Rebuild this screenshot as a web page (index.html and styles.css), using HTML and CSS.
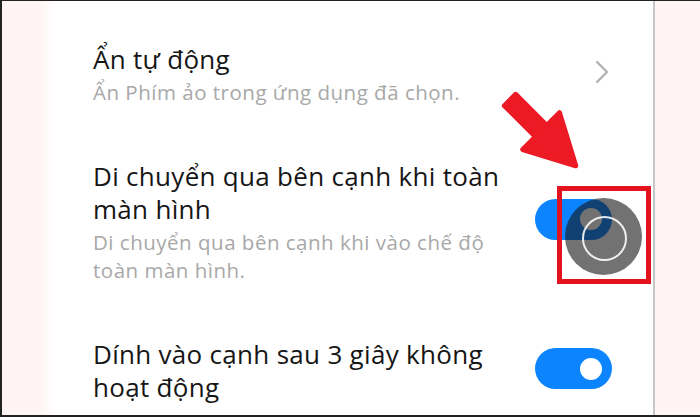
FILE: index.html
```html
<!DOCTYPE html>
<html lang="vi">
<head>
<meta charset="utf-8">
<title>Cài đặt</title>
<link rel="stylesheet" href="styles.css">
</head>
<body>
<div class="frame">
  <div class="side side-left"></div>
  <main class="main">
    <div class="row">
      <div class="text">
        <div class="title">Ẩn tự động</div>
        <div class="sub">Ẩn Phím ảo trong ứng dụng đã chọn.</div>
      </div>
      <div class="control control-chevron">
        <svg class="chevron" width="14" height="24" viewBox="0 0 14 24"><path d="M2 2 L12 12 L2 22" fill="none" stroke="#b3b3b3" stroke-width="2.4" stroke-linecap="round" stroke-linejoin="round"/></svg>
      </div>
    </div>
    <div class="row">
      <div class="text">
        <div class="title">Di chuyển qua bên cạnh khi toàn màn hình</div>
        <div class="sub">Di chuyển qua bên cạnh khi vào chế độ toàn màn hình.</div>
      </div>
      <div class="control">
        <div class="toggle"><span class="knob"></span></div>
      </div>
    </div>
    <div class="row">
      <div class="text">
        <div class="title">Dính vào cạnh sau 3 giây không hoạt động</div>
      </div>
      <div class="control">
        <div class="toggle"><span class="knob"></span></div>
      </div>
    </div>

    <div class="touch"><span class="touch-ring"></span></div>
    <div class="highlight"></div>
    <svg class="annot" viewBox="55 1 596 414" width="596" height="414">
      <polygon transform="translate(510 100) rotate(45)" points="0,-8 44,-8 44,-26 93,0 44,26 44,8 0,8" fill="#ec1a24" stroke="#ec1a24" stroke-width="5" stroke-linejoin="round"/>
    </svg>
  </main>
  <div class="side side-right"></div>
</div>
</body>
</html>
```

FILE: styles.css
```css
* { box-sizing: border-box; }
html, body { margin: 0; padding: 0; background: #fff; }
body { font-family: "Open Sans", Roboto, "Noto Sans", "Liberation Sans", sans-serif; }

.frame {
  width: 700px;
  height: 417px;
  display: flex;
  border-top: 1px solid #222;
  border-left: 2px solid #222;
  border-bottom: 2px solid #222;
  overflow: hidden;
}

.side-left {
  width: 53px;
  flex: none;
  background: linear-gradient(to right, #fff3f4 0%, #fff3f4 70%, #ffffff 100%);
}

.side-right {
  width: 49px;
  flex: none;
  background: #fff3f4;
  border-left: 2px solid #c6c6c6;
}

.main {
  flex: 1;
  position: relative;
  background: #fff;
  padding: 42px 41px 0 38px;
  display: flex;
  flex-direction: column;
  gap: 54.5px;
}

.row {
  display: flex;
  align-items: center;
  gap: 30px;
}

.text {
  width: 412px;
  flex: none;
}

.title {
  font-size: 26px;
  line-height: 33px;
  color: #161616;
  font-weight: 500;
  letter-spacing: 0.3px;
}

.sub {
  margin-top: 1.5px;
  font-size: 20.5px;
  line-height: 28px;
  color: #a8a8a8;
  letter-spacing: 0.5px;
}

.control {
  flex: 1;
  display: flex;
  justify-content: flex-end;
  margin-bottom: 5px;
}

.control-chevron {
  align-self: flex-start;
  margin-top: 17px;
  margin-bottom: 0;
  padding-right: 3px;
}

.chevron { display: block; }

.toggle {
  width: 77px;
  height: 41px;
  border-radius: 21px;
  background: #0b84fe;
  display: flex;
  align-items: center;
  justify-content: flex-end;
  padding-right: 10px;
}

.knob {
  width: 22px;
  height: 22px;
  border-radius: 50%;
  background: #fff;
}

.touch {
  position: absolute;
  left: 510px;
  top: 197px;
  width: 77px;
  height: 77px;
  border-radius: 50%;
  background: rgba(20, 20, 20, 0.6);
  display: flex;
  align-items: center;
  justify-content: center;
}

.touch-ring {
  width: 45px;
  height: 45px;
  border-radius: 50%;
  border: 2.5px solid rgba(255, 255, 255, 0.88);
  margin: 3px 0 0 2px;
}

.highlight {
  position: absolute;
  left: 502px;
  top: 185px;
  width: 94px;
  height: 98px;
  border: 5px solid #e3121f;
}

.annot {
  position: absolute;
  left: 0;
  top: 0;
  pointer-events: none;
}
```
